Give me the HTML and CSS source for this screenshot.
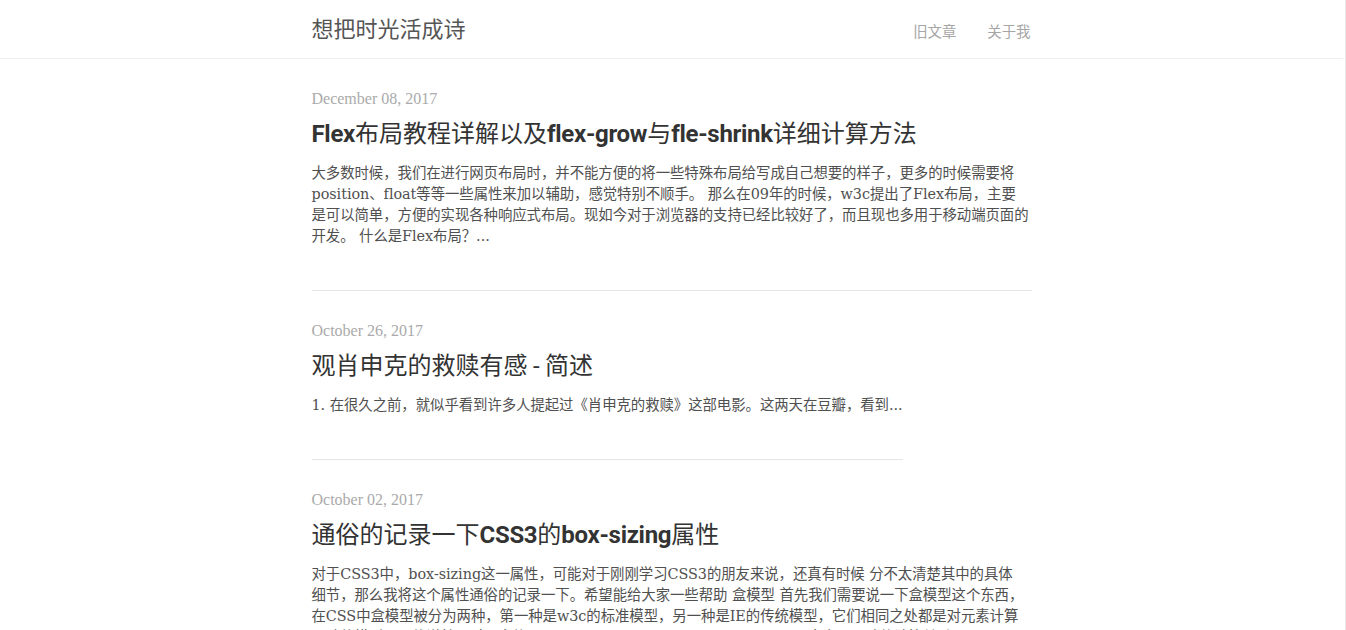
FILE: index.html
```html
<!DOCTYPE html>
<html lang="zh-CN">
<head>
<meta charset="utf-8">
<title>想把时光活成诗</title>
<link rel="stylesheet" href="styles.css">
</head>
<body>
<div class="page">
  <header class="site-header">
    <div class="container header-inner">
      <a class="site-title" href="#">想把时光活成诗</a>
      <nav class="site-nav">
        <a href="#">旧文章</a>
        <a href="#">关于我</a>
      </nav>
    </div>
  </header>
  <main class="container post-list">
    <article class="post">
      <div class="post-date">December 08, 2017</div>
      <h2 class="post-title"><b>Flex</b>布局教程详解以及<b>flex-grow</b>与<b>fle-shrink</b>详细计算方法</h2>
      <p class="post-excerpt">大多数时候，我们在进行网页布局时，并不能方便的将一些特殊布局给写成自己想要的样子，更多的时候需要将<br>position、float等等一些属性来加以辅助，感觉特别不顺手。 那么在09年的时候，w3c提出了Flex布局，主要<br>是可以简单，方便的实现各种响应式布局。现如今对于浏览器的支持已经比较好了，而且现也多用于移动端页面的<br>开发。 什么是Flex布局？...</p>
    </article>
    <article class="post post--brief">
      <div class="post-date">October 26, 2017</div>
      <h2 class="post-title">观肖申克的救赎有感 <b class="thin">-</b> 简述</h2>
      <p class="post-excerpt">1. 在很久之前，就似乎看到许多人提起过《肖申克的救赎》这部电影。这两天在豆瓣，看到...</p>
    </article>
    <article class="post">
      <div class="post-date">October 02, 2017</div>
      <h2 class="post-title">通俗的记录一下<b>CSS3</b>的<b>box-sizing</b>属性</h2>
      <p class="post-excerpt">对于CSS3中，box-sizing这一属性，可能对于刚刚学习CSS3的朋友来说，还真有时候 分不太清楚其中的具体<br>细节，那么我将这个属性通俗的记录一下。希望能给大家一些帮助 盒模型 首先我们需要说一下盒模型这个东西，<br>在CSS中盒模型被分为两种，第一种是w3c的标准模型，另一种是IE的传统模型，它们相同之处都是对元素计算<br>尺寸的模型，具体说就是对元素的width、height、padding、border以及元素实际尺寸的计算关系。...</p>
    </article>
  </main>
</div>
</body>
</html>
```

FILE: styles.css
```css
html, body {
  margin: 0;
  padding: 0;
  background: #fff;
}

body {
  border-right: 1px solid #e8e8e8;
  font-family: "DejaVu Serif", "Noto Sans CJK SC", serif;
  color: #505050;
}

a {
  text-decoration: none;
  color: inherit;
}

.page {
  margin-right: 2px;
  min-height: 630px;
}

.container {
  width: 720px;
  margin: 0 auto;
}

.site-header {
  height: 58px;
  border-bottom: 1px solid #eee;
}

.header-inner {
  height: 58px;
  display: flex;
  justify-content: space-between;
  align-items: baseline;
}

.site-title {
  font-family: "Noto Sans CJK SC", sans-serif;
  font-size: 22px;
  line-height: 54px;
  color: #555;
}

.site-nav {
  display: flex;
  gap: 31px;
  margin-right: 1px;
  font-family: "Noto Sans CJK SC", sans-serif;
  font-size: 14.4px;
  line-height: 20px;
  color: #a6a6a6;
}

.post-list {
  display: flex;
  flex-direction: column;
  align-items: flex-start;
}

.post {
  width: 100%;
  box-sizing: border-box;
  padding: 30px 0 43px;
  border-bottom: 1px solid #e6e6e6;
}

.post--brief {
  width: auto;
}

.post-date {
  font-family: "Liberation Serif", serif;
  font-size: 16px;
  line-height: 20px;
  color: #aaa;
}

.post-title {
  margin: 6px 0 0;
  font-family: "Noto Sans CJK SC", sans-serif;
  font-size: 24px;
  line-height: 34px;
  font-weight: normal;
  color: #333;
}

.post-title b {
  font-family: "Roboto", sans-serif;
  font-weight: bold;
  letter-spacing: -0.3px;
  line-height: 0;
}

.post-title b.thin {
  font-weight: normal;
  letter-spacing: 0;
}

.post-excerpt {
  margin: 14px 0 0;
  font-size: 14.4px;
  line-height: 21px;
  letter-spacing: -0.05px;
  white-space: nowrap;
}
```
